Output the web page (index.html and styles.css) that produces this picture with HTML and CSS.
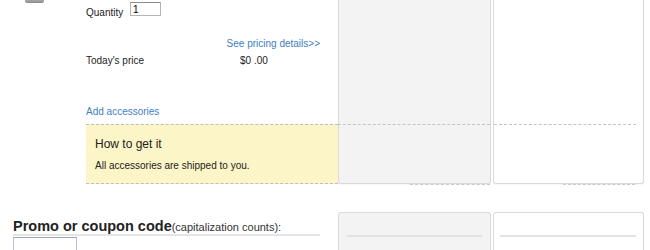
FILE: index.html
```html
<!DOCTYPE html>
<html lang="en">
<head>
  <meta charset="UTF-8" />
  <title>Cart - Accessories</title>
  <link rel="stylesheet" href="styles.css">
</head>
<body>
  <div class="page">
    <div class="top-row">
      <div class="thumb-col">
        <div class="thumb"></div>
      </div>

      <div class="main-col">
        <div class="details">
          <div class="qty-row">
            <label class="qty-label" for="qty">Quantity</label>
            <input class="qty-input" id="qty" type="text" value="1">
          </div>
          <div class="pricing-link"><a href="#">See pricing details&gt;&gt;</a></div>
          <div class="price-row">
            <span class="price-label">Today's price</span>
            <span class="price-value">$0 .00</span>
          </div>
          <div class="accessories"><a href="#">Add accessories</a></div>
        </div>
        <div class="howto">
          <h3>How to get it</h3>
          <p>All accessories are shipped to you.</p>
        </div>
      </div>

      <div class="panel panel-gray">
        <div class="panel-top"></div>
        <div class="panel-bottom"></div>
      </div>
      <div class="panel panel-white">
        <div class="panel-top"></div>
        <div class="panel-bottom"></div>
      </div>
    </div>

    <div class="tail">
      <div class="tail-dash tail-a"></div>
      <div class="tail-dash tail-b"></div>
    </div>

    <div class="bottom-row">
      <div class="promo">
        <h2>Promo or coupon code<span>(capitalization counts):</span></h2>
        <input class="promo-input" type="text">
      </div>
      <div class="box box-gray"><div class="box-line"></div></div>
      <div class="box box-white"><div class="box-line"></div></div>
    </div>
  </div>
</body>
</html>
```

FILE: styles.css
```css
body {
  margin: 0;
  font-family: "Liberation Sans", Arial, sans-serif;
  color: #222;
  background: #fff;
  height: 250px;
  overflow: hidden;
}

a {
  color: #3f80c2;
  text-decoration: none;
}

.page {
  width: 650px;
}

.top-row {
  display: flex;
  align-items: flex-start;
}

.thumb-col {
  width: 86px;
}

.thumb {
  margin-left: 25px;
  width: 19px;
  height: 3px;
  background: linear-gradient(#a8a8a8, #8a8a8a);
  border-radius: 0 0 2px 2px;
}

.main-col {
  width: 252px;
}

.details {
  height: 124px;
  font-size: 10px;
  line-height: 12px;
}

.qty-row {
  display: flex;
  align-items: flex-start;
}

.qty-label {
  margin-top: 7px;
  width: 44px;
}

.qty-input {
  margin: 2px 0 0;
  box-sizing: border-box;
  width: 31px;
  height: 14px;
  padding: 0 2px;
  border: 1px solid #b5b5b5;
  border-top-color: #8c8c8c;
  font: 10px "Liberation Sans", Arial, sans-serif;
  color: #000;
}

.pricing-link {
  margin-top: 19px;
  padding-right: 18px;
  text-align: right;
}

.price-row {
  display: flex;
  margin-top: 5px;
}

.price-label {
  width: 154px;
}

.accessories {
  margin-top: 39px;
}

.howto {
  height: 58px;
  box-sizing: content-box;
  padding-left: 9px;
  background: #fcf5c7;
  border-top: 1px dashed #bdbdbd;
  border-bottom: 1px dashed #bdbdbd;
}

.howto h3 {
  margin: 0;
  padding-top: 12px;
  font-size: 12px;
  line-height: 14px;
  font-weight: normal;
}

.howto p {
  margin: 9px 0 0;
  font-size: 10px;
  line-height: 12px;
}

.panel {
  box-sizing: border-box;
  height: 184px;
  border: 1px solid #dadada;
  border-top: none;
  border-radius: 0 0 3px 3px;
  box-shadow: 0 1px 1px rgba(0,0,0,0.04);
}

.panel-gray {
  width: 153px;
  background: #f3f3f3;
}

.panel-white {
  width: 151px;
  margin-left: 2px;
  background: #fff;
}

.panel-top {
  height: 124px;
}

.panel-bottom {
  border-top: 1px dashed #c4c4c4;
}

.panel-gray .panel-bottom {
  margin-left: -1px;
}

.panel-white .panel-bottom {
  margin-right: 7px;
}

.tail {
  display: flex;
  height: 1px;
}

.tail-dash {
  height: 0;
  border-top: 1px dashed #c8c8c8;
}

.tail-a {
  margin-left: 410px;
  width: 80px;
}

.tail-b {
  margin-left: 73px;
  width: 72px;
}

.bottom-row {
  display: flex;
  align-items: flex-start;
}

.promo {
  margin: 33px 18px 0 13px;
  width: 307px;
}

.promo h2 {
  margin: 0;
  height: 16px;
  font-size: 14.5px;
  line-height: 17px;
  font-weight: bold;
  color: #222;
  border-bottom: 2px solid #e4e4e4;
}

.promo h2 span {
  font-size: 11px;
  font-weight: normal;
  color: #333;
}

.promo-input {
  display: block;
  margin: 1px 0 0;
  box-sizing: border-box;
  width: 64px;
  height: 13px;
  border: 1px solid #b9c4d0;
  border-top-color: #9aa6b3;
  border-bottom: none;
}

.box {
  box-sizing: border-box;
  height: 38px;
  margin-top: 27px;
  border: 1px solid #dadada;
  border-bottom: none;
  border-radius: 3px 3px 0 0;
}

.box-gray {
  width: 153px;
  background: #f3f3f3;
}

.box-white {
  width: 151px;
  margin-left: 2px;
  background: #fff;
}

.box-line {
  margin: 22px 8px 0 8px;
  height: 2px;
  background: #e2e2e2;
}

.box-white .box-line {
  margin: 22px 7px 0 6px;
}
```
